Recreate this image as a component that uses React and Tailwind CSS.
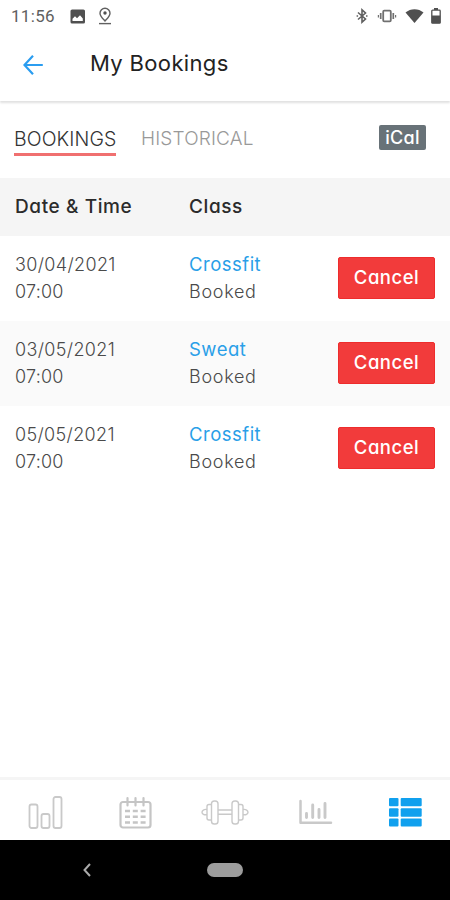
const bookings = [
  { date: '30/04/2021', time: '07:00', name: 'Crossfit', status: 'Booked' },
  { date: '03/05/2021', time: '07:00', name: 'Sweat', status: 'Booked' },
  { date: '05/05/2021', time: '07:00', name: 'Crossfit', status: 'Booked' },
]

function StatusBar() {
  return (
    <div className="flex h-8 shrink-0 items-center pl-[11px] pr-[9px] text-[#606060]">
      <span className="w-[59px] font-[Roboto] text-[17px] leading-8 tracking-[0.3px]">11:56</span>
      <svg className="h-[15px] w-[15px]" viewBox="0 0 15 15">
        <rect x="0.5" y="0.5" width="14.5" height="14" rx="1.6" fill="#505050" />
        <path d="M2.5 12V9.7L5 7.2 7 9.2 10 6.2l2.8 3.2V12z" fill="#fff" />
      </svg>
      <svg className="ml-3 h-[18px] w-4" viewBox="0 0 16 18" fill="none" stroke="#606060" strokeWidth="1.4">
        <path d="M8 14C5.2 11 3 9 3 6.2a5 5 0 0 1 10 0C13 9 10.8 11 8 14z" />
        <circle cx="8" cy="6" r="1.7" fill="#505050" stroke="none" />
        <path d="M2 16.6h12" />
      </svg>
      <div className="ml-auto flex items-center">
        <svg className="mr-[3px] h-4 w-3" viewBox="0 0 12 16" fill="none" stroke="#606060" strokeWidth="1.6">
          <path d="M2 4.5l7.5 6.5L6 14.2V1.8L9.5 5 2 11.5" />
          <path d="M0.6 8h1.5M10 8h1.5" />
        </svg>
        <svg className="ml-1.5 h-4 w-5" viewBox="0 0 20 16" fill="none" stroke="#707070">
          <rect x="6.2" y="2.7" width="7.6" height="10.6" rx="1" strokeWidth="1.8" />
          <path d="M3.7 5v6M16.3 5v6" strokeWidth="1.7" />
          <path d="M1.4 7v2.5M18.6 7v2.5" strokeWidth="1.2" />
        </svg>
        <svg className="ml-2 h-4 w-[19px]" viewBox="0 0 19 16">
          <path d="M0.5 4.5C5.5 0 13.5 0 18.5 4.5L9.5 15z" fill="#505050" />
        </svg>
        <svg className="ml-[7px] h-4 w-[10px]" viewBox="0 0 10 16">
          <path d="M3 0h4v2H3z" fill="#505050" />
          <rect x="0.8" y="2.2" width="8.4" height="13" rx="0.8" fill="#fff" stroke="#505050" strokeWidth="1.3" />
          <path d="M0.8 7.5h8.4v7.7H0.8z" fill="#505050" />
        </svg>
      </div>
    </div>
  )
}

function BookingRow({ booking }) {
  return (
    <div className="flex h-[85px] items-center px-[15px] pb-px text-[18px] leading-[27px] text-[#4a4a4a] even:bg-[#fafafa]">
      <div className="w-[174px] font-light">
        <div className="tracking-[0.35px]">{booking.date}</div>
        <div className="tracking-[0.2px]">{booking.time}</div>
      </div>
      <div className="flex-1">
        <div className="text-[18.5px] tracking-[0.5px] text-[#2a9fe8]">{booking.name}</div>
        <div className="font-light tracking-[0.7px]">{booking.status}</div>
      </div>
      <button className="mb-px h-[42px] w-[97px] rounded-[2px] border border-[#ee2c2c] bg-[#f23b3b] text-[18.5px] font-medium tracking-[0.5px] text-white">
        Cancel
      </button>
    </div>
  )
}

function BottomNav() {
  return (
    <nav className="grid h-[63px] shrink-0 grid-cols-5 place-items-center border-t-3 border-[#f5f5f5] bg-white pt-[3px]">
      <svg className="h-9 w-9" viewBox="0 0 36 36" fill="none" stroke="#c9c9c9" strokeWidth="1.8">
        <rect x="2.5" y="10.5" width="8" height="23.5" rx="2" />
        <rect x="14.5" y="20" width="8" height="14" rx="2" />
        <rect x="26.5" y="3" width="8" height="31" rx="2" />
      </svg>
      <svg className="h-9 w-9" viewBox="0 0 36 36" fill="none" stroke="#c5c5c5">
        <rect x="3.5" y="8" width="30" height="25.5" rx="2.5" strokeWidth="2.2" />
        <path d="M10.5 4v7.5M18.5 4v7.5M26.5 4v7.5" strokeWidth="2.2" strokeLinecap="round" />
        <path
          d="M8 17h5M15.8 17h5M23.6 17h5M8 22.7h5M15.8 22.7h5M23.6 22.7h5M8 28.4h5M15.8 28.4h5M23.6 28.4h5"
          strokeWidth="2.5"
        />
      </svg>
      <svg className="h-9 w-12" viewBox="0 0 48 36" fill="none" stroke="#c9c9c9" strokeWidth="1.4">
        <path d="M6 15.500c-3-.5-5 1-5 2.700s2 3 5 2.500M42 15.500c3-.5 5 1 5 2.700s-2 3-5 2.500M17 16h14M17 20.200h14" />
        <path d="M10.500 10.500H8a2 2 0 0 0-2 2v11.500a2 2 0 0 0 2 2h2.500M37.500 10.500H40a2 2 0 0 1 2 2v11.500a2 2 0 0 1-2 2h-2.500" />
        <rect x="10.500" y="7" width="6.500" height="23" rx="2.800" />
        <rect x="31" y="7" width="6.500" height="23" rx="2.800" />
      </svg>
      <svg className="h-9 w-9" viewBox="0 0 36 36" fill="none" stroke="#c9c9c9">
        <path d="M3.500 7v21.800H34" strokeWidth="2.500" strokeLinecap="round" strokeLinejoin="round" />
        <path d="M9.500 19.500v4M15.700 11v12.500M22 15.500v8M28 9.500v14" strokeWidth="2.900" strokeLinecap="round" />
      </svg>
      <svg className="h-9 w-9" viewBox="0 0 36 36" fill="#10a0ee">
        <rect x="2" y="4" width="9.500" height="8.200" rx="1" />
        <rect x="13.700" y="4" width="21" height="8.200" rx="1" />
        <rect x="2" y="14.200" width="9.500" height="8.500" rx="1" />
        <rect x="13.700" y="14.200" width="21" height="8.500" rx="1" />
        <rect x="2" y="24.500" width="9.500" height="8" rx="1" />
        <rect x="13.700" y="24.500" width="21" height="8" rx="1" />
      </svg>
    </nav>
  )
}

function App() {
  return (
    <div className="flex h-[900px] w-[450px] flex-col overflow-hidden bg-white font-[Inter,sans-serif] [font-feature-settings:'cv11','ss03']">
      <StatusBar />

      <header className="flex h-[69px] shrink-0 items-center pb-[3px] pl-[23px] shadow-[0_2px_2px_rgba(0,0,0,0.12)]">
        <svg className="h-5 w-5" viewBox="0 0 20 20" fill="none" stroke="#2b9df0" strokeWidth="2.2">
          <path d="M10 0.8L1.5 10l8.5 9.2M1.5 10h18.3" />
        </svg>
        <h1 className="ml-[47px] pb-[3px] text-[22px] tracking-[0.35px] text-[#222]">My Bookings</h1>
      </header>

      {/* Tabs */}
      <div className="flex h-[77px] shrink-0 items-center pl-[14px] pr-6">
        <button className="h-[33px] w-[102px] whitespace-nowrap border-b-3 border-[#f07070] pt-0.5 text-left text-[19.5px] leading-[28px] font-light tracking-[0.1px] text-[#333]">
          BOOKINGS
        </button>
        <button className="ml-[25px] h-[33px] whitespace-nowrap pt-0.5 pb-[3px] text-[19px] leading-[28px] font-light tracking-[0.15px] text-[#999]">
          HISTORICAL
        </button>
        <button className="mb-1 ml-auto h-[25px] w-[47px] rounded-[2px] bg-[#687278] text-[18px] leading-[25px] font-medium tracking-[0.3px] text-white">
          iCal
        </button>
      </div>

      <div className="flex h-[58px] shrink-0 items-center bg-[#f5f5f5] pl-[15px] text-[19px] font-medium tracking-[0.6px] text-[#2b2b2b]">
        <div className="w-[174px]">Date &amp; Time</div>
        <div>Class</div>
      </div>

      <div className="flex-1">
        {bookings.map((booking) => (
          <BookingRow key={booking.date} booking={booking} />
        ))}
      </div>

      <BottomNav />

      {/* Android system buttons */}
      <div className="grid h-[60px] shrink-0 grid-cols-[173px_104px_1fr] items-center justify-items-center bg-black">
        <svg className="h-[14px] w-2" viewBox="0 0 8 14" fill="none" stroke="#aaa" strokeWidth="2">
          <path d="M7 1L1.5 7 7 13" />
        </svg>
        <div className="h-[14px] w-9 rounded-full bg-[#9c9c9c]" />
      </div>
    </div>
  )
}

export default App
